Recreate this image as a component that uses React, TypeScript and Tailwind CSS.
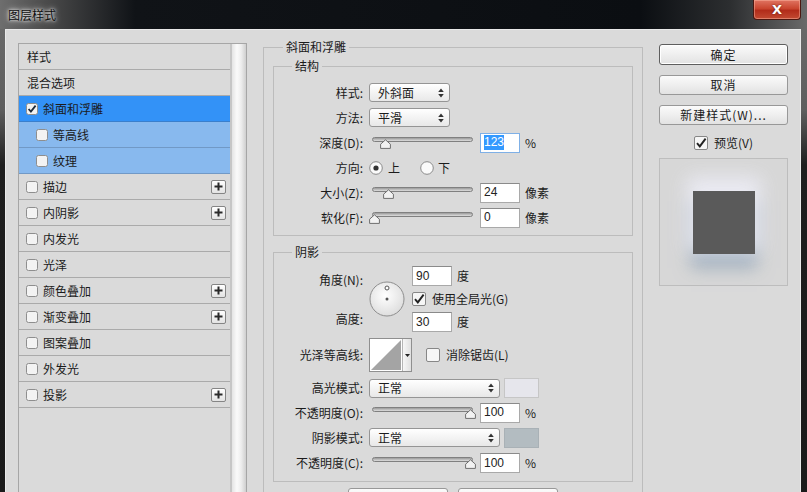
import React from 'react';

const FONT = "font-['Noto_Sans_CJK_SC','Noto_Sans',sans-serif]";

type Item = {
  label: string;
  box?: boolean;
  sub?: boolean;
  checked?: boolean;
  plus?: boolean;
  tone?: 'sel' | 'light';
};

const items: Item[] = [
  { label: '样式' },
  { label: '混合选项' },
  { label: '斜面和浮雕', box: true, checked: true, tone: 'sel' },
  { label: '等高线', box: true, sub: true, tone: 'light' },
  { label: '纹理', box: true, sub: true, tone: 'light' },
  { label: '描边', box: true, plus: true },
  { label: '内阴影', box: true, plus: true },
  { label: '内发光', box: true },
  { label: '光泽', box: true },
  { label: '颜色叠加', box: true, plus: true },
  { label: '渐变叠加', box: true, plus: true },
  { label: '图案叠加', box: true },
  { label: '外发光', box: true },
  { label: '投影', box: true, plus: true },
];

function SmallBox({ checked = false }: { checked?: boolean }) {
  return (
    <svg width="12" height="12" viewBox="0 0 12 12" className="shrink-0">
      <rect x="0.5" y="0.5" width="11" height="11" rx="2" fill="#f3f3f3" stroke="#8e8e8e" />
      {checked && <path d="M2.6 6 L4.9 8.5 L9.6 2.6" fill="none" stroke="#1d2a3a" strokeWidth="1.8" />}
    </svg>
  );
}

function BigBox({ checked = false }: { checked?: boolean }) {
  return (
    <svg width="14" height="14" viewBox="0 0 14 14" className="shrink-0">
      <rect x="0.5" y="0.5" width="13" height="13" rx="1.5" fill="#f6f6f6" stroke="#878787" />
      {checked && <path d="M3 7.2 L5.8 10.4 L11.6 2.6" fill="none" stroke="#222" strokeWidth="1.9" />}
    </svg>
  );
}

function Radio({ on = false }: { on?: boolean }) {
  return (
    <svg width="14" height="14" viewBox="0 0 14 14" className="shrink-0">
      <circle cx="7" cy="7" r="6.3" fill="#fafafa" stroke="#8a8a8a" />
      {on && <circle cx="7" cy="7" r="2.6" fill="#333" />}
    </svg>
  );
}

function Plus() {
  return (
    <div className="ml-auto mr-[4px] w-[15px] h-[14px] flex items-center justify-center rounded-[2px] border border-[#858585] bg-[linear-gradient(to_bottom,#ffffff,#e3e3e3)]">
      <svg width="9" height="9" viewBox="0 0 9 9">
        <path d="M4.5 0.5 V8.5 M0.5 4.5 H8.5" stroke="#2a2a2a" strokeWidth="2" />
      </svg>
    </div>
  );
}

function Select({ value, w }: { value: string; w: string }) {
  return (
    <div className={`${w} h-[19px] shrink-0 flex items-center justify-between pl-[8px] pr-[5px] rounded-[3px] border border-[#959595] bg-[linear-gradient(to_bottom,#ffffff,#e8e8e8)]`}>
      <span className="leading-[16px]">{value}</span>
      <svg width="6" height="10" viewBox="0 0 6 10">
        <path d="M3 0.5 L5.8 4 H0.2 Z M3 9.5 L5.8 6 H0.2 Z" fill="#333" />
      </svg>
    </div>
  );
}

function Field({ value, active = false }: { value: string; active?: boolean }) {
  return (
    <div
      className={`w-[40px] h-[20px] shrink-0 flex items-center pl-[3px] bg-white border font-['Liberation_Sans',sans-serif] text-[12px] text-[#222] ${
        active ? 'border-[#7fb0e6]' : 'border-[#a9a9a9] border-t-[#8a8a8a]'
      }`}
    >
      <span className={active ? 'bg-[#3399ff] text-white leading-[15px]' : 'leading-[15px]'}>{value}</span>
    </div>
  );
}

function Slider({ at }: { at: number }) {
  return (
    <div className="relative w-[107px] h-[12px] shrink-0">
      <div className="mx-[3px] h-[5px] rounded-full border border-[#808080] bg-[linear-gradient(to_bottom,#9a9a9a,#dedede)]" />
      <svg className="absolute top-[2px]" style={{ left: at - 5.5 }} width="11" height="10" viewBox="0 0 11 10">
        <path d="M5.5 0.8 L10.4 5.2 V9.4 H0.6 V5.2 Z" fill="#f2f2f2" stroke="#6e6e6e" />
      </svg>
    </div>
  );
}

function Dial() {
  return (
    <svg width="36" height="36" viewBox="0 0 36 36">
      <defs>
        <radialGradient id="dialfill" cx="0.45" cy="0.4" r="0.6">
          <stop offset="0" stopColor="#ffffff" />
          <stop offset="1" stopColor="#dedede" />
        </radialGradient>
      </defs>
      <circle cx="18" cy="18" r="17" fill="url(#dialfill)" stroke="#8e8e8e" />
      <circle cx="18" cy="7" r="2" fill="#ffffff" stroke="#555" />
      <circle cx="18" cy="18" r="1.5" fill="#555" />
    </svg>
  );
}

function Contour() {
  return (
    <div className="flex h-[34px] border border-[#8f8f8f] bg-white">
      <svg width="32" height="32" viewBox="0 0 32 32">
        <path d="M1 31 L31 1 V31 Z" fill="#a4a4a4" />
      </svg>
      <div className="w-[9px] border-l border-[#b5b5b5] bg-[linear-gradient(to_right,#f6f6f6,#e0e0e0)] flex items-center justify-center">
        <svg width="5" height="3" viewBox="0 0 5 3">
          <path d="M0 0 H5 L2.5 3 Z" fill="#222" />
        </svg>
      </div>
    </div>
  );
}

function Row({ label, h = 'h-[25px]', children }: { label: string; h?: string; children: React.ReactNode }) {
  return (
    <div className={`flex items-center ${h}`}>
      <span className="w-[89px] shrink-0 text-right leading-[16px]">{label}</span>
      <div className="ml-[6px] flex items-center">{children}</div>
    </div>
  );
}

function Btn({ children, className = '', primary = false }: { children?: React.ReactNode; className?: string; primary?: boolean }) {
  return (
    <div
      className={`flex items-center justify-center rounded-[3px] border bg-[linear-gradient(to_bottom,#fbfbfb,#e2e2e2)] tracking-[1px] leading-[16px] ${
        primary ? 'border-[#5e5e5e] shadow-[inset_0_0_0_1px_#ffffff]' : 'border-[#989898]'
      } ${className}`}
    >
      {children}
    </div>
  );
}

function TitleBar() {
  return (
    <div className="h-[29px] shrink-0 flex items-start justify-between pl-[8px] pr-[6px] bg-[linear-gradient(to_right,#6e6e6e_0px,#4c4c4c_45px,#101317_135px,#0b0e12_640px,#2c2e30_730px,#6a6a6a_807px)]">
      <span className="mt-[6px] leading-[17px] text-[12px] text-[#0d0d0d] [text-shadow:0_0_6px_#ffffff,0_0_3px_#ffffff]">图层样式</span>
      <div className="w-[48px] h-[20px] rounded-b-[4px] border border-t-0 border-[#4b1710] bg-[linear-gradient(to_bottom,#e07462_0%,#c9452f_45%,#b22c1a_55%,#c24a32_100%)] shadow-[inset_0_0_0_1px_rgba(255,190,170,0.45)] flex items-center justify-center">
        <span className="font-['DejaVu_Sans',sans-serif] font-bold text-[13px] leading-none text-white [text-shadow:0_0_2px_#5a1a10]">X</span>
      </div>
    </div>
  );
}

function StyleList() {
  return (
    <div className="self-stretch mt-[13px] ml-[12px] flex border-l border-t border-r border-[#a6a6a6]">
      <div className="w-[213px] border-r-2 border-[#c6c6c6]">
        {items.map((it) => (
          <div
            key={it.label}
            className={`h-[26px] flex items-center border-b ${
              it.tone === 'sel'
                ? 'bg-[#3392f7] border-[#3a7fcc]'
                : it.tone === 'light'
                ? 'bg-[#88b9ee] border-[#7199c6]'
                : 'border-[#aaaaaa]'
            } ${it.box ? (it.sub ? 'pl-[17px]' : 'pl-[7px]') : 'pl-[8px]'}`}
          >
            {it.box && <SmallBox checked={it.checked} />}
            <span className={`leading-[16px] ${it.box ? 'ml-[5px]' : ''}`}>{it.label}</span>
            {it.plus && <Plus />}
          </div>
        ))}
      </div>
      <div className="w-[14px] bg-[linear-gradient(to_right,#e4e4e4,#fafafa_35%,#eeeeee_65%,#cfcfcf)]" />
    </div>
  );
}

function Options() {
  return (
    <fieldset className="mt-[9px] ml-[16px] w-[380px] shrink-0 min-w-0 border border-[#bcbcbc]">
      <legend className="ml-[19px] px-[3px] leading-[16px]">斜面和浮雕</legend>

      <fieldset className="mt-[3px] mx-[9px] min-w-0 border border-[#bcbcbc] pt-[6px] pb-[5px]">
        <legend className="ml-[18px] px-[3px] leading-[16px]">结构</legend>
        <Row label="样式:">
          <Select value="外斜面" w="w-[81px]" />
        </Row>
        <Row label="方法:">
          <Select value="平滑" w="w-[81px]" />
        </Row>
        <Row label="深度(D):">
          <Slider at={16} />
          <div className="ml-[4px]">
            <Field value="123" active />
          </div>
          <span className="ml-[5px]">%</span>
        </Row>
        <Row label="方向:">
          <Radio on />
          <span className="ml-[5px] leading-[16px]">上</span>
          <div className="ml-[20px]">
            <Radio />
          </div>
          <span className="ml-[4px] leading-[16px]">下</span>
        </Row>
        <Row label="大小(Z):">
          <Slider at={19} />
          <div className="ml-[4px]">
            <Field value="24" />
          </div>
          <span className="ml-[5px]">像素</span>
        </Row>
        <Row label="软化(F):">
          <Slider at={5} />
          <div className="ml-[4px]">
            <Field value="0" />
          </div>
          <span className="ml-[5px]">像素</span>
        </Row>
      </fieldset>

      <fieldset className="mt-[8px] mx-[9px] min-w-0 border border-[#bcbcbc] pt-[4px] pb-[5px]">
        <legend className="ml-[18px] px-[3px] leading-[16px]">阴影</legend>
        <div className="flex h-[70px]">
          <div className="w-[89px] shrink-0 flex flex-col items-end pt-[8px]">
            <span className="leading-[16px]">角度(N):</span>
            <span className="leading-[16px] mt-[23px]">高度:</span>
          </div>
          <div className="ml-[6px] self-center">
            <Dial />
          </div>
          <div className="ml-[7px] flex flex-col pt-[2px]">
            <div className="flex items-center">
              <Field value="90" />
              <span className="ml-[5px] leading-[16px]">度</span>
            </div>
            <div className="flex items-center h-[25px]">
              <BigBox checked />
              <span className="ml-[6px] leading-[16px]">使用全局光(G)</span>
            </div>
            <div className="flex items-center mt-[1px]">
              <Field value="30" />
              <span className="ml-[5px] leading-[16px]">度</span>
            </div>
          </div>
        </div>
        <Row label="光泽等高线:" h="h-[42px]">
          <Contour />
          <div className="ml-[14px]">
            <BigBox />
          </div>
          <span className="ml-[6px] leading-[16px]">消除锯齿(L)</span>
        </Row>
        <Row label="高光模式:" h="h-[24px]">
          <Select value="正常" w="w-[131px]" />
          <div className="ml-[4px] w-[35px] h-[20px] border border-[#c6c6c6] bg-[#e6e6ec]" />
        </Row>
        <Row label="不透明度(O):">
          <Slider at={101} />
          <div className="ml-[4px]">
            <Field value="100" />
          </div>
          <span className="ml-[5px]">%</span>
        </Row>
        <Row label="阴影模式:">
          <Select value="正常" w="w-[131px]" />
          <div className="ml-[4px] w-[35px] h-[20px] border border-[#a9b1b6] bg-[#b3bcc1]" />
        </Row>
        <Row label="不透明度(C):" h="h-[26px]">
          <Slider at={101} />
          <div className="ml-[4px]">
            <Field value="100" />
          </div>
          <span className="ml-[5px]">%</span>
        </Row>
      </fieldset>

      {/* bottom buttons, only their top edge shows in the window */}
      <div className="mt-[6px] flex justify-center gap-[10px]">
        <Btn className="w-[100px] h-[22px]" />
        <Btn className="w-[100px] h-[22px]" />
      </div>
    </fieldset>
  );
}

function Actions() {
  return (
    <div className="ml-[16px] mt-[14px] w-[129px] shrink-0 flex flex-col">
      <Btn primary className="h-[21px]">确定</Btn>
      <Btn className="mt-[10px] h-[20px]">取消</Btn>
      <Btn className="mt-[10px] h-[20px]">新建样式(W)...</Btn>
      <div className="mt-[6px] h-[24px] flex items-center justify-center">
        <BigBox checked />
        <span className="ml-[6px] leading-[16px]">预览(V)</span>
      </div>
      <div className="mt-[3px] h-[128px] border border-[#bdbdbd] bg-[#d7d7d7] flex items-center justify-center">
        <div className="w-[62px] h-[63px] bg-[#5a5a5a] shadow-[0_-8px_18px_6px_rgba(236,236,244,0.95),0_12px_16px_2px_rgba(140,160,180,0.75)]" />
      </div>
    </div>
  );
}

export default function App() {
  return (
    <div
      className={`w-[807px] h-[492px] overflow-hidden flex flex-col text-[12px] text-[#1b1b1b] ${FONT} bg-[linear-gradient(to_bottom,#6c6c6c_0px,#5e5e5e_110px,#1e1e1e_165px,#1a1a1a_492px)]`}
    >
      <TitleBar />
      <div className="flex-1 min-h-0 ml-[5px] mr-[6px] flex items-start bg-[#dadada] border-l border-t border-r border-[#e9e9e9]">
        <StyleList />
        <Options />
        <Actions />
      </div>
    </div>
  );
}
